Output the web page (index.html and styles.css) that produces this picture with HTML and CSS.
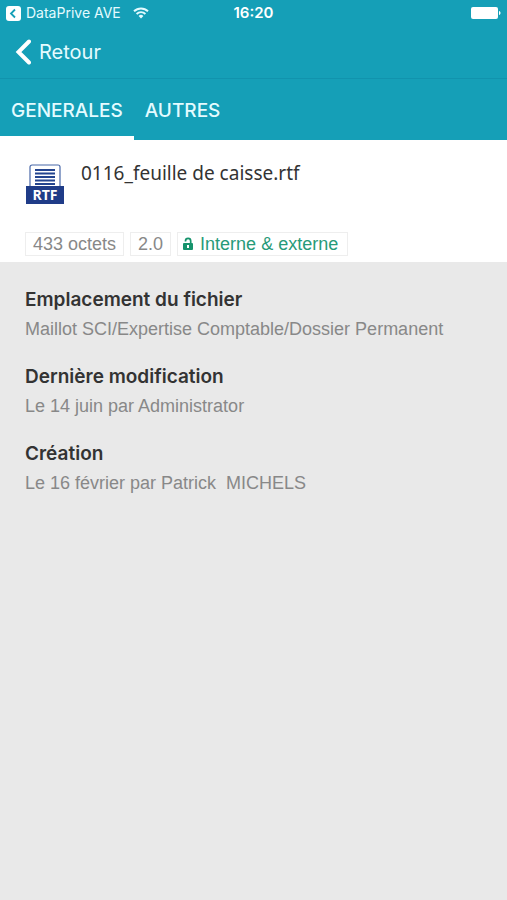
FILE: index.html
```html
<!DOCTYPE html>
<html lang="fr">
<head>
<meta charset="utf-8">
<meta name="viewport" content="width=device-width, initial-scale=1">
<title>0116_feuille de caisse.rtf</title>
<link rel="stylesheet" href="styles.css">
</head>
<body>
<header class="top">
  <div class="status">
    <div class="status-left">
      <a class="app-link" href="#">
        <svg width="15" height="15" viewBox="0 0 15 15" aria-hidden="true"><rect width="15" height="15" rx="3" fill="#fff"/><path d="M9 3.5 5 7.5l4 4" fill="none" stroke="#159fb7" stroke-width="1.8"/></svg>
        <span>DataPrive AVE</span>
      </a>
      <svg width="16" height="12" viewBox="0 0 16 12" aria-hidden="true"><g fill="none" stroke="#e4fbff" stroke-width="1.9"><path d="M1 4.3a10 10 0 0 1 14 0"/><path d="M3.6 7a6.2 6.2 0 0 1 8.8 0"/></g><path d="M5.6 8.9a3.4 3.4 0 0 1 4.8 0L8 11.4z" fill="#e4fbff"/></svg>
    </div>
    <time class="clock">16:20</time>
    <div class="status-right">
      <svg width="30" height="12" viewBox="0 0 30 12" aria-hidden="true"><rect width="27" height="12" rx="2" fill="#fff"/><path d="M28 4c2 .3 2 3.700 0 4z" fill="#fff"/></svg>
    </div>
  </div>
  <nav class="bar">
    <a class="back" href="#">
      <svg width="16" height="26" viewBox="0 0 16 26" aria-hidden="true"><path d="M14 2.500 3.500 13 14 23.500" fill="none" stroke="#fff" stroke-width="4" stroke-linecap="round"/></svg>
      <span>Retour</span>
    </a>
  </nav>
  <div class="tabs" role="tablist">
    <button class="tab active" role="tab" aria-selected="true">GENERALES</button>
    <button class="tab" role="tab" aria-selected="false">AUTRES</button>
  </div>
</header>
<main>
  <section class="file">
    <div class="file-head">
      <svg class="file-icon" width="38" height="40" viewBox="0 0 38 40" role="img" aria-label="RTF">
        <path d="M4 23V3a2 2 0 0 1 2-2h26a2 2 0 0 1 2 2v20" fill="#fff" stroke="#4968a8" stroke-width="1.200"/>
        <path d="M9 6h20M9 9.500h20M9 13h20M9 16.500h20M9 20h20" stroke="#23448f" stroke-width="1.900"/>
        <rect y="22" width="38" height="18" fill="#1f3c88"/>
        <text x="19" y="36" text-anchor="middle" class="icon-label">RTF</text>
      </svg>
      <h1 class="file-name">0116_feuille de caisse.rtf</h1>
    </div>
    <div class="tags">
      <span class="tag">433 octets</span>
      <span class="tag">2.0</span>
      <span class="tag access">
        <svg width="12" height="14" viewBox="0 0 12 14" aria-hidden="true"><path d="M3.500 4.500V4a2.600 2.600 0 0 1 5.200 0v3" fill="none" stroke="#16936c" stroke-width="1.700"/><rect x="1" y="6" width="10" height="7" rx="1" fill="#16936c"/><rect x="5" y="8" width="2" height="3" fill="#fff"/></svg>
        <span>Interne &amp; externe</span>
      </span>
    </div>
  </section>
  <dl class="details">
    <div class="entry"><dt>Emplacement du fichier</dt><dd>Maillot SCI/Expertise Comptable/Dossier Permanent</dd></div>
    <div class="entry"><dt>Dernière modification</dt><dd>Le 14 juin par Administrator</dd></div>
    <div class="entry"><dt>Création</dt><dd>Le 16 février par Patrick&nbsp; MICHELS</dd></div>
  </dl>
</main>
</body>
</html>
```
FILE: styles.css
```css
* { box-sizing: border-box; }

body {
  margin: 0;
  min-height: 100vh;
  background: #e9e9e9;
  color: #333;
  font-family: "Liberation Sans", Arial, sans-serif;
}

svg { display: block; flex: none; }

a { color: inherit; text-decoration: none; }

.top { background: #159fb7; color: #e4fbff; }

.status {
  display: grid;
  grid-template-columns: 1fr auto 1fr;
  align-items: center;
  height: 26px;
  padding: 0 6px;
  font: 14px/26px Inter, sans-serif;
}

.status-left { display: flex; align-items: center; gap: 12px; }

.app-link { display: flex; align-items: center; gap: 5px; white-space: nowrap; }

.clock { font: 600 15px/26px Inter, sans-serif; color: #fff; }

.status-right { display: flex; justify-content: flex-end; }

.bar {
  display: flex;
  align-items: center;
  height: 53px;
  padding: 0 15px;
  border-bottom: 1px solid #1193ad;
}

.back {
  display: flex;
  align-items: center;
  gap: 8px;
  font: 20px/24px Inter, sans-serif;
}

.tabs { display: flex; height: 61px; }

.tab {
  padding: 7px 11px 0;
  border: 0;
  border-bottom: 4px solid transparent;
  background: none;
  color: #e4fbff;
  font: 500 19px/24px Inter, sans-serif;
}

.tab.active { border-bottom-color: #fff; }

.file { padding: 20px 25px 6px; background: #fff; }

.file-head { display: flex; gap: 17px; }

.file-icon { margin: 4px 0 0 1px; }

.icon-label { fill: #fff; font: 700 14px "Open Sans", sans-serif; }

.file-name {
  margin: 0;
  font: 400 19px/26px "Noto Sans", sans-serif;
}

.tags { display: flex; gap: 6px; margin-top: 28px; }

.tag {
  display: flex;
  align-items: center;
  gap: 6px;
  height: 24px;
  padding: 0 7px;
  border: 1px solid #eee;
  color: #888;
  font-size: 18px;
  white-space: nowrap;
}

.access { padding: 0 9px 0 4px; color: #279a79; }

.details { margin: 0; padding: 24px 25px; }

.entry { margin-bottom: 20px; }

.entry dt { font: 600 19px/27px Inter, sans-serif; }

.entry dd {
  margin: 2px 0 0;
  color: #888;
  font-size: 18px;
  line-height: 28px;
}
```
